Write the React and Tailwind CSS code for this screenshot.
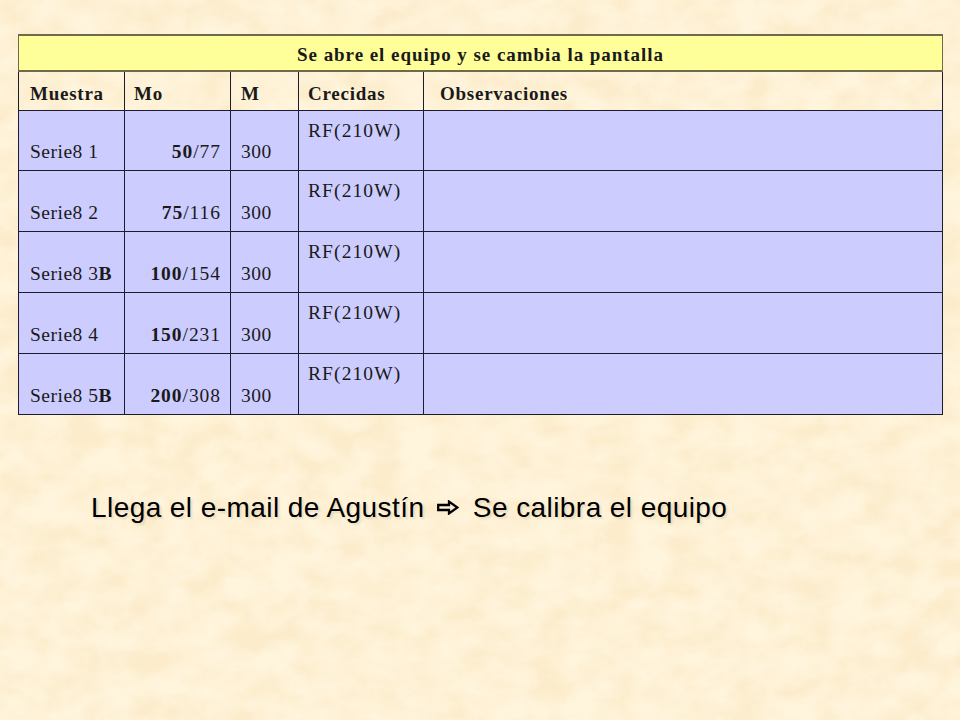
const rows = [
  ["1", "", "50", "77", "h-[60px]"],
  ["2", "", "75", "116", "h-[61px]"],
  ["3", "B", "100", "154", "h-[61px]"],
  ["4", "", "150", "231", "h-[61px]"],
  ["5", "B", "200", "308", "h-[61px]"],
];

const cell = "border border-[#1c1c2c] p-0 align-bottom";

export default function App() {
  return (
    <div className="relative w-[960px] h-[720px] overflow-hidden bg-[#fff4dc] font-['Liberation_Serif',serif] text-[#1a1a1a]">
      <svg className="absolute inset-0" width="960" height="720" aria-hidden="true">
        <filter id="parchment" x="0" y="0" width="100%" height="100%">
          <feTurbulence type="fractalNoise" baseFrequency="0.03 0.04" numOctaves="5" seed="11" />
          <feColorMatrix type="matrix" values="0 0 0 0 0.97  0 0 0 0 0.84  0 0 0 0 0.6  1.6 1.6 0 0 -1.2" />
        </filter>
        <rect width="960" height="720" filter="url(#parchment)" />
      </svg>

      <div className="relative pt-[34px] pl-[18px]">
        <table className="w-[925px] table-fixed border-collapse text-[19.5px] leading-[20px] tracking-[0.5px]">
          <colgroup>
            <col className="w-[106px]" />
            <col className="w-[106px]" />
            <col className="w-[68px]" />
            <col className="w-[125px]" />
            <col />
          </colgroup>
          <tbody>
            <tr className="h-[36px] bg-[#ffff99]">
              <td colSpan={5} className="border border-[#6e6a4c] border-t-2 border-b-2 text-center align-middle font-bold pt-[6px] pb-[2px] tracking-[0.95px] text-[19px]">
                Se abre el equipo y se cambia la pantalla
              </td>
            </tr>
            <tr className="h-[39px] font-bold text-[19px] tracking-[0.75px]">
              <td className={`${cell} align-middle pl-[11px] pt-[6px]`}>Muestra</td>
              <td className={`${cell} align-middle pl-[9px] pt-[6px]`}>Mo</td>
              <td className={`${cell} align-middle pl-[10px] pt-[6px]`}>M</td>
              <td className={`${cell} align-middle pl-[9px] pt-[6px]`}>Crecidas</td>
              <td className="border border-[#1c1c2c] border-l-0 align-middle pl-[16px] pt-[6px]">Observaciones</td>
            </tr>
            {rows.map(([n, b, bold, rest, h]) => (
              <tr key={n} className={`${h} bg-[#ccccff]`}>
                <td className={`${cell} pl-[11px] pb-[8px]`}>
                  <span>Serie8 {n}</span>
                  {b && <b>{b}</b>}
                </td>
                <td className={`${cell} text-right pr-[9px] pb-[8px] tracking-[0.95px]`}>
                  <b>{bold}</b>/{rest}
                </td>
                <td className={`${cell} pl-[10px] pb-[8px]`}>300</td>
                <td className={`${cell} align-top pl-[9px] pt-[10px] tracking-[1.1px]`}>RF(210W)</td>
                <td className={cell}></td>
              </tr>
            ))}
          </tbody>
        </table>

        <p className="ml-[73px] mt-[75px] flex items-center font-['Liberation_Sans',sans-serif] text-[28px] leading-[36px] tracking-[0.43px] text-black [text-shadow:2px_2px_2px_rgba(120,110,80,0.16)] whitespace-pre">
          <span>Llega el e-mail de Agustín </span>
          <svg className="ml-[4px] mr-[6px]" width="22" height="15" viewBox="0 0 22 15" aria-hidden="true">
            <path d="M1.2 5H12V1.6L20.4 7.5L12 13.4V10H1.2Z" fill="none" stroke="#000" strokeWidth="2.3" strokeLinejoin="miter" />
          </svg>
          <span> Se calibra el equipo</span>
        </p>
      </div>
    </div>
  );
}
